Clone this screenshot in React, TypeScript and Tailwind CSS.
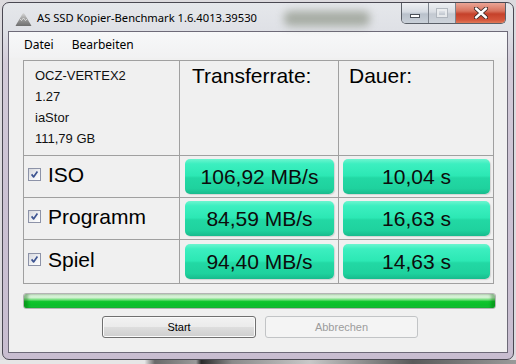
import React from "react";

const Check = () => (
  <div className="w-[13px] h-[13px] shrink-0 border border-[#8d93a8] bg-[linear-gradient(135deg,#d6d8de_0%,#f2f3f5_60%,#ffffff_100%)] flex items-center justify-center">
    <svg width="9" height="9" viewBox="0 0 9 9">
      <path d="M1.6 4.4 L3.6 6.9 L7.4 1.6" stroke="#3e5592" strokeWidth="1.7" fill="none" strokeLinejoin="round" />
    </svg>
  </div>
);

const greenBox =
  "h-[35px] rounded-[5px] flex items-center justify-center text-[21px] text-[#0c0c0c] leading-[24px] bg-[linear-gradient(to_bottom,#6cf5cf_0%,#3cefc0_14%,#2ce8b4_48%,#22d8a4_54%,#1fd29e_84%,#18bb8d_100%)] shadow-[1px_1px_1px_rgba(0,0,0,0.12)]";

const Row = ({ label, rate, time }: { label: string; rate: string; time: string }) => (
  <>
    <div className="bg-[#f0f0f0] flex items-center pl-[4px] pb-[4px] gap-[7px]">
      <Check />
      <span className="text-[21px] leading-[24px] text-black">{label}</span>
    </div>
    <div className="bg-[#f0f0f0] flex items-center pl-[5px]">
      <div className={greenBox + " w-[149px]"}>{rate}</div>
    </div>
    <div className="bg-[#f0f0f0] flex items-center pl-[4px]">
      <div className={greenBox + " w-[147px]"}>{time}</div>
    </div>
  </>
);

export default function App() {
  return (
    <div className="w-[516px] h-[364px] overflow-hidden bg-[#dcdade] flex flex-col font-['Liberation_Sans',Arial,sans-serif]">
      <div className="pt-[2px] pl-[2px]">
        {/* Window */}
        <div className="w-[512px] h-[358px] rounded-[7px] border border-[#4a4852] bg-[linear-gradient(to_bottom,#e5e7eb_0px,#dfe1e6_26px,#d3cbd9_60px,#cbc1d3_200px,#c8bdd0_358px)] flex flex-col px-[5px] pb-[6px]">
          {/* Title bar */}
          <div className="h-[28px] relative flex items-center">
            <div className="absolute left-[276px] top-[8px] w-[86px] h-[15px] rounded-[6px] bg-[#7f8776] opacity-60 blur-[4px]" />
            <svg width="17" height="15" viewBox="0 0 17 15" className="ml-[7px] mt-[4px] relative shrink-0">
              <defs>
                <linearGradient id="ic" x1="0" y1="0" x2="0" y2="1">
                  <stop offset="0" stopColor="#d8d8d8" />
                  <stop offset="0.5" stopColor="#9a9a9a" />
                  <stop offset="1" stopColor="#6e6e6e" />
                </linearGradient>
              </defs>
              <path d="M0.5 14 C2 11 4 8 6 4.5 C7 2.5 8 1 8.5 1 C9 1 10 2.5 11 4.5 C13 8 15 11 16.5 14 Z" fill="url(#ic)" />
              <path d="M5 7 L6.5 8.5 L8.5 6 L10.5 8.5 L12 7" stroke="#e8e8e8" strokeWidth="0.8" fill="none" />
            </svg>
            <span className="relative ml-[5px] mt-[3px] text-[11.2px] text-black font-['Noto_Sans',sans-serif] whitespace-nowrap">
              AS SSD Kopier-Benchmark 1.6.4013.39530
            </span>
            {/* caption buttons */}
            <div className="absolute right-[2px] top-[0px] flex h-[21px] rounded-b-[5px] border border-t-0 border-[#5b6068] overflow-hidden">
              <div className="w-[27px] h-full flex items-end justify-center pb-[5px] bg-[linear-gradient(to_bottom,#eef0f3_0%,#d6dbe2_45%,#b9c1cb_55%,#c9d0d8_100%)] border-r border-[#7d838c]">
                <div className="w-[10px] h-[4px] bg-white border border-[#4b5058]" />
              </div>
              <div className="w-[27px] h-full flex items-center justify-center bg-[linear-gradient(to_bottom,#eef0f3_0%,#d9dde3_45%,#c3c9d1_55%,#ced4db_100%)] border-r border-[#7d838c]">
                <div className="w-[10px] h-[8px] border-[2px] border-[#eef0f2] outline outline-1 outline-[#aab0b8] opacity-80" />
              </div>
              <div className="w-[49px] h-full flex items-center justify-center bg-[linear-gradient(to_bottom,#eaa596_0%,#d8735e_40%,#c5412a_55%,#d4553b_85%,#e07a58_100%)]">
                <svg width="14" height="12" viewBox="0 0 14 12">
                  <path d="M2 1.5 L12 10.5 M12 1.5 L2 10.5" stroke="#3b2a28" strokeWidth="4.2" strokeLinecap="round" />
                  <path d="M2 1.5 L12 10.5 M12 1.5 L2 10.5" stroke="#ffffff" strokeWidth="2.4" strokeLinecap="round" />
                </svg>
              </div>
            </div>
          </div>
          {/* Client area */}
          <div className="flex-1 border border-[#6d6a78] bg-[#f0f0f0] flex flex-col">
            {/* Menu */}
            <div className="h-[26px] flex items-center pl-[15px] gap-[18px] text-[12px] text-black font-['Noto_Sans',sans-serif] bg-[linear-gradient(to_bottom,#f7f8f9,#f1f1f2)]">
              <span>Datei</span>
              <span>Bearbeiten</span>
            </div>
            <div className="pt-[2px] pl-[14px] flex flex-col">
              {/* Table */}
              <div className="w-[471px] grid grid-cols-[155px_158px_154px] grid-rows-[94px_41px_41px_43px] gap-px p-px bg-[#a0a0a0]">
                <div className="bg-[#f0f0f0] pl-[11px] pt-[4px] text-[13px] leading-[21px] text-[#111]">
                  <div>OCZ-VERTEX2</div>
                  <div>1.27</div>
                  <div>iaStor</div>
                  <div>111,79 GB</div>
                </div>
                <div className="bg-[#f0f0f0] pl-[12px] pt-[3px] text-[21px] leading-[24px] text-black">Transferrate:</div>
                <div className="bg-[#f0f0f0] pl-[10px] pt-[3px] text-[21px] leading-[24px] text-black">Dauer:</div>
                <Row label="ISO" rate="106,92 MB/s" time="10,04 s" />
                <Row label="Programm" rate="84,59 MB/s" time="16,63 s" />
                <Row label="Spiel" rate="94,40 MB/s" time="14,63 s" />
              </div>
              {/* Progress */}
              <div className="mt-[9px] w-[473px] h-[16px] rounded-[3px] border border-[#b4b4b4] overflow-hidden bg-[linear-gradient(to_bottom,#f2fbf2_0%,#d0f2d0_26%,#6adc74_42%,#10c52e_54%,#0bbf2a_78%,#1ed243_100%)] shadow-[inset_4px_0_3px_rgba(0,90,0,0.35),inset_-4px_0_3px_rgba(0,90,0,0.35)]" />
              {/* Buttons */}
              <div className="mt-[7px] flex pl-[79px] gap-[9px]">
                <div className="w-[154px] h-[22px] rounded-[3px] border border-[#707070] shadow-[inset_0_0_0_1px_#fbfbfb] bg-[linear-gradient(to_bottom,#f2f2f2_0%,#ebebeb_48%,#dddddd_52%,#cfcfcf_100%)] flex items-center justify-center text-[11px] text-black">
                  Start
                </div>
                <div className="w-[153px] h-[22px] rounded-[3px] border border-[#c2c4c6] bg-[#f4f4f4] flex items-center justify-center text-[11px] text-[#9c9c9c]">
                  Abbrechen
                </div>
              </div>
            </div>
          </div>
        </div>
      </div>
      <div className="h-[4px] bg-[linear-gradient(to_right,#e6e6e6_0%,#e6e6e6_28%,#6a6a6a_30%,#9a9a9a_38%,#2a2a2a_39%,#8a8a8a_45%,#c8c8c8_60%,#5a5a5a_80%,#9a9a9a_100%)]" />
    </div>
  );
}
